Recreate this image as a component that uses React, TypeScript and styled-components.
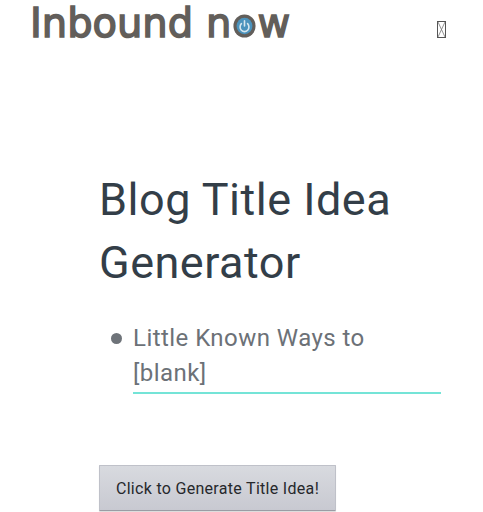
import { createGlobalStyle, styled } from 'styled-components';

const GlobalStyle = createGlobalStyle`
  html, body {
    margin: 0;
    padding: 0;
    background: #fff;
    overflow: hidden;
  }
`;

const Page = styled.div`
  width: 483px;
  height: 512px;
  overflow: hidden;
  font-family: Roboto, 'Liberation Sans', sans-serif;
`;

const Header = styled.header`
  display: flex;
  align-items: flex-start;
  justify-content: space-between;
  height: 60px;
  padding: 0 37px 0 30px;
`;

const Logo = styled.div`
  display: flex;
  align-items: baseline;
  height: 47px;
  font-family: 'DejaVu Sans', sans-serif;
  font-size: 40px;
  line-height: 47px;
  font-weight: 400;
  color: #625e5a;
  -webkit-text-stroke: 1.5px #625e5a;
  white-space: nowrap;
`;

const LogoGap = styled.span`
  width: 13px;
`;

const PowerIcon = styled.svg`
  width: 23px;
  height: 24px;
  margin: 0 1px 9px 2px;
  align-self: flex-end;
`;

const MissingGlyph = styled.svg`
  width: 9px;
  height: 17px;
  margin-top: 21px;
`;

const Main = styled.main`
  padding: 108px 42px 0 99px;
`;

const Title = styled.h1`
  margin: 0;
  font-size: 45px;
  font-weight: 400;
  line-height: 63px;
  color: #333e48;
  letter-spacing: 0.5px;
`;

const IdeaList = styled.ul`
  list-style: none;
  margin: 27px 0 0;
  padding: 0 0 0 34px;
`;

const IdeaItem = styled.li`
  position: relative;
  padding-bottom: 1px;
  font-size: 24px;
  font-weight: 400;
  line-height: 35px;
  letter-spacing: 0.45px;
  color: #6c7177;
  border-bottom: 2px solid #74e4d7;

  &::before {
    content: '';
    position: absolute;
    left: -22px;
    top: 12px;
    width: 11px;
    height: 11px;
    border-radius: 50%;
    background: #6e7379;
  }
`;

const GenerateButton = styled.button`
  display: block;
  width: 237px;
  height: 46px;
  margin-top: 71px;
  padding: 0;
  border: 1px solid #bfc1c9;
  border-bottom: 1px solid #9a9ca4;
  border-radius: 1px;
  background: linear-gradient(#d8dadf, #c8c9d1);
  box-shadow: 0 1px 1px rgba(0, 0, 0, 0.15);
  font-family: inherit;
  font-size: 16px;
  letter-spacing: 0.3px;
  color: #26282c;
`;

export default function App() {
  return (
    <Page>
      <GlobalStyle />
      <Header>
        <Logo>
          Inbound
          <LogoGap />
          n
          <PowerIcon viewBox="0 0 26 26" preserveAspectRatio="none">
            <circle cx="13" cy="13" r="12.5" fill="#625e5a" />
            <circle cx="13" cy="13" r="9" fill="#4b93bd" />
            <path d="M9.5 10.5a5 5 0 1 0 7 0" fill="none" stroke="#d5e6ef" strokeWidth="1.8" strokeLinecap="round" />
            <path d="M13 7.5v5.5" stroke="#d5e6ef" strokeWidth="1.8" strokeLinecap="round" />
          </PowerIcon>
          w
        </Logo>
        <MissingGlyph viewBox="0 0 9 17">
          <rect x="0.5" y="0.5" width="8" height="16" fill="none" stroke="#555" strokeWidth="1" />
          <path d="M1 1l7 15M8 1L1 16" stroke="#777" strokeWidth="0.8" fill="none" />
        </MissingGlyph>
      </Header>
      <Main>
        <Title>Blog Title Idea Generator</Title>
        <IdeaList>
          <IdeaItem>Little Known Ways to [blank]</IdeaItem>
        </IdeaList>
        <GenerateButton>Click to Generate Title Idea!</GenerateButton>
      </Main>
    </Page>
  );
}
